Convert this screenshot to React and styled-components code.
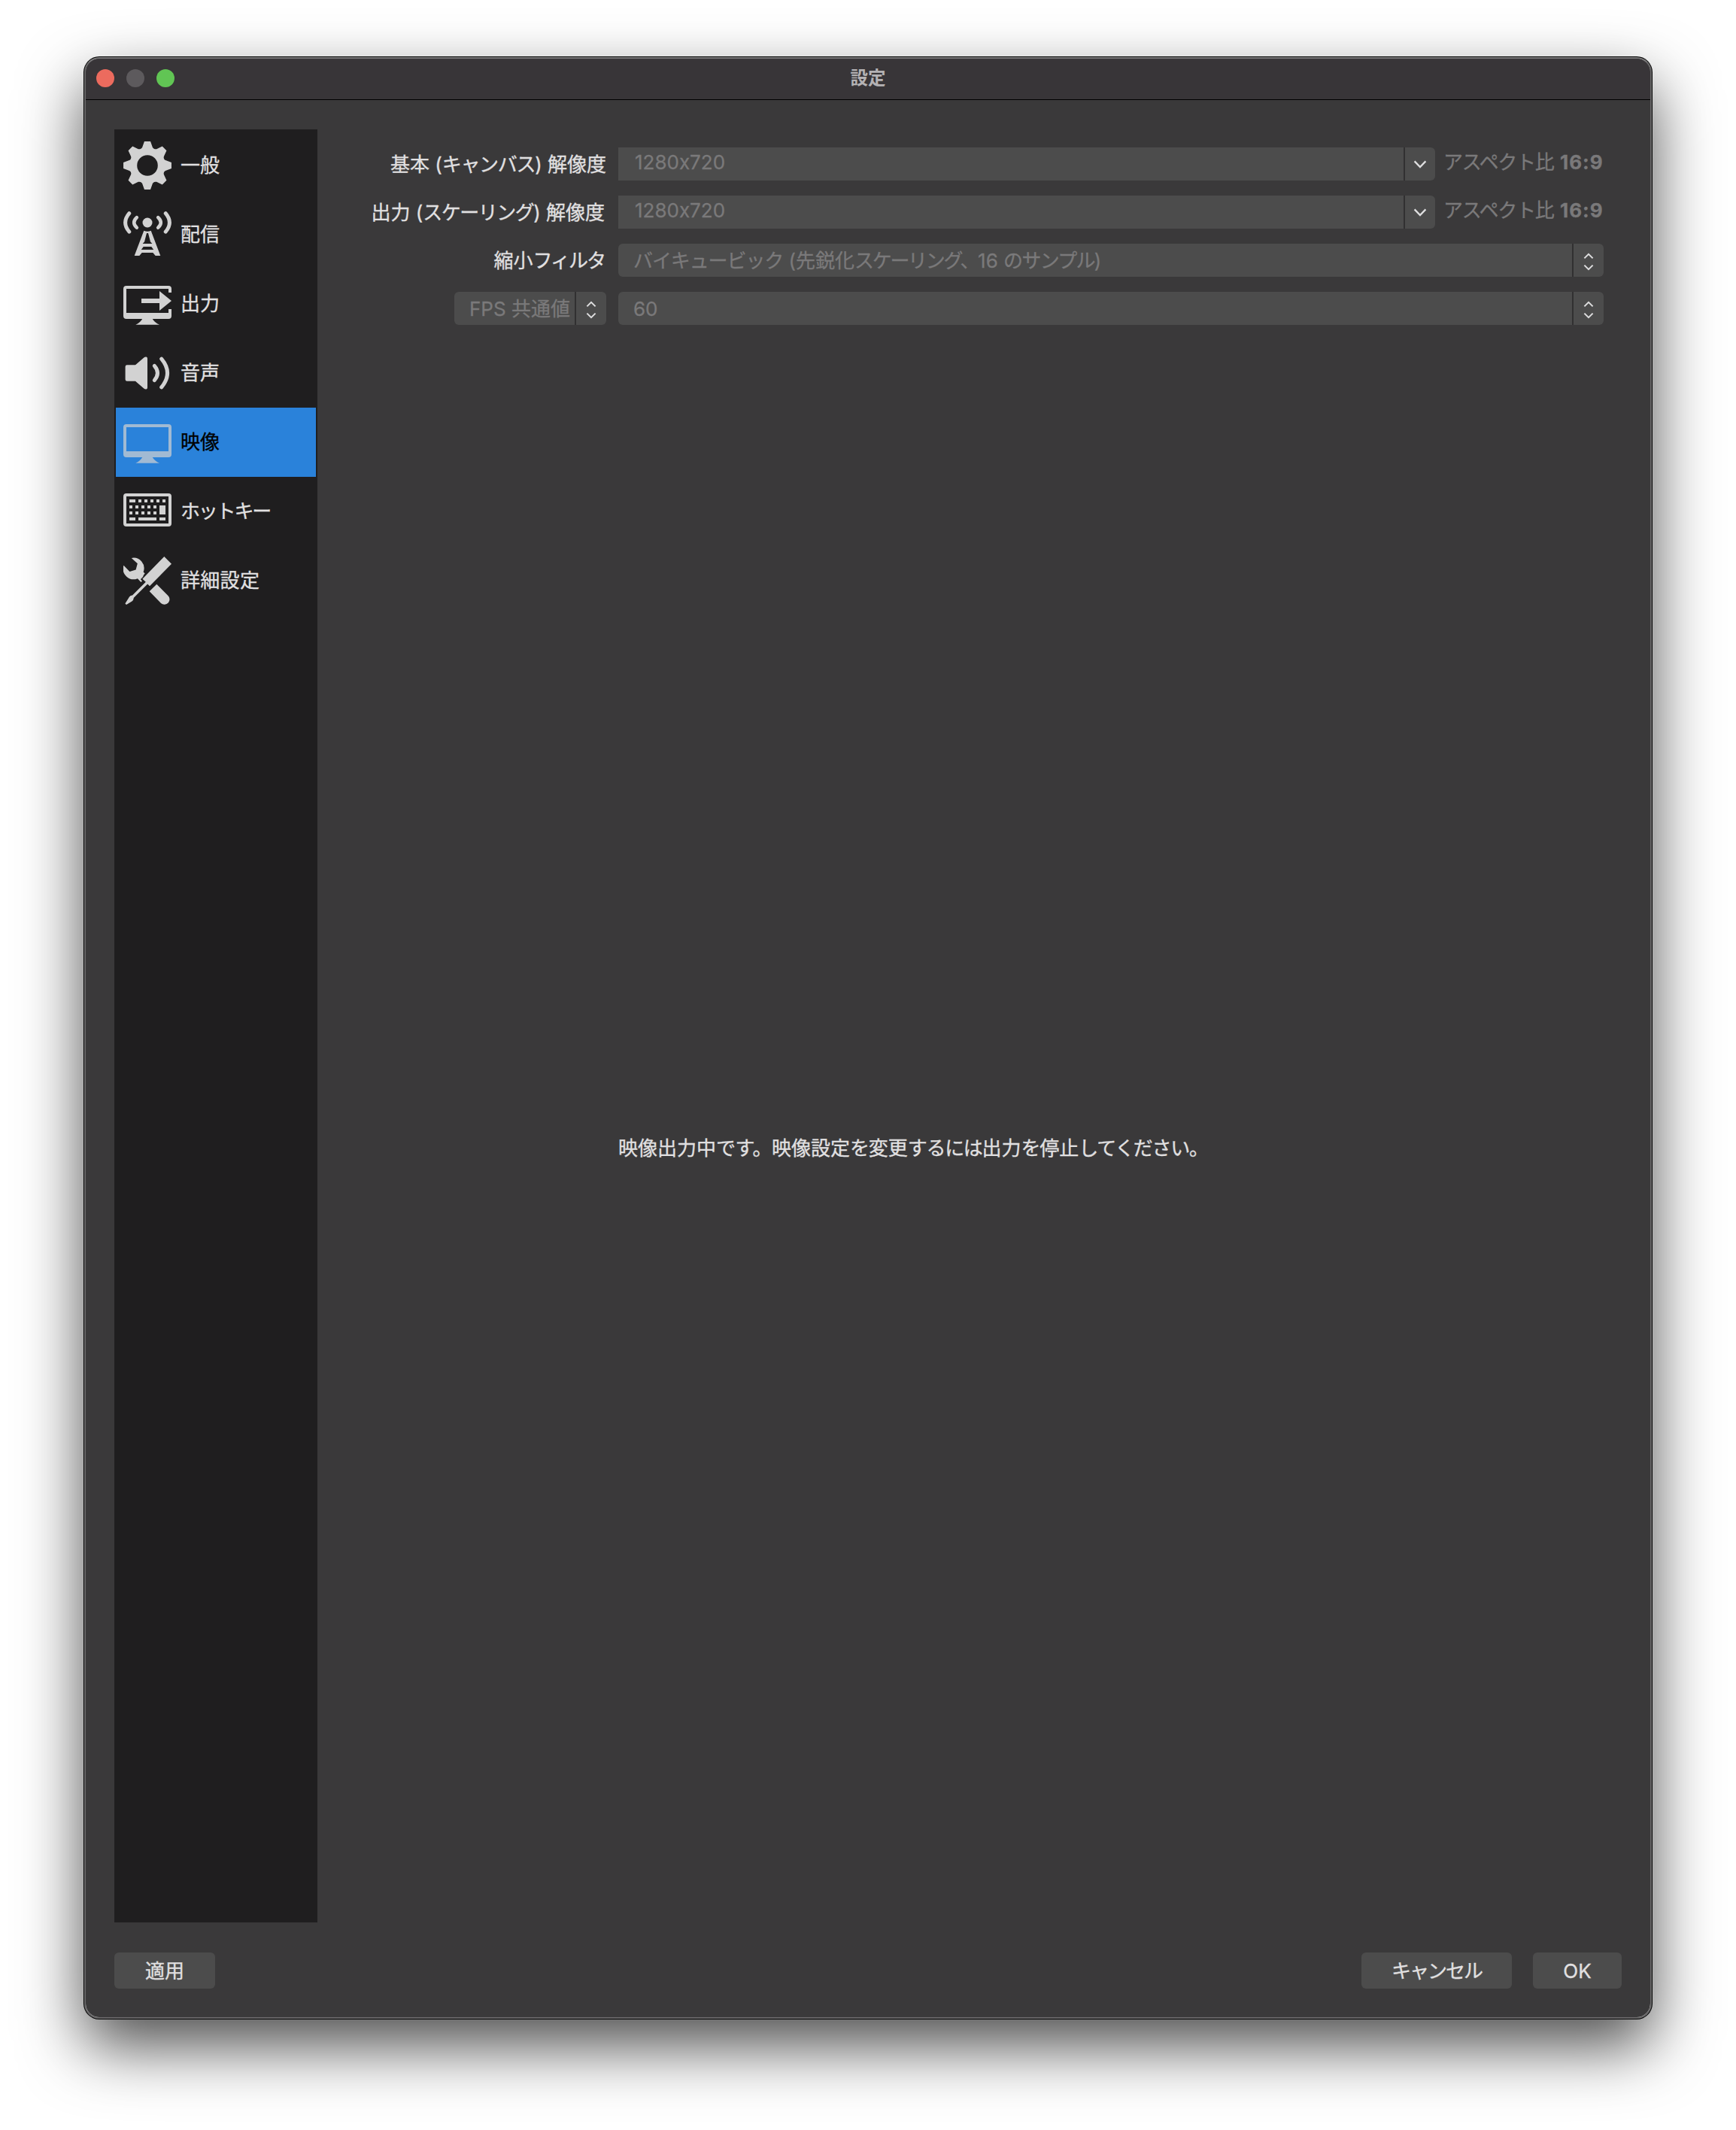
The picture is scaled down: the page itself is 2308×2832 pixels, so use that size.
import React from "react";
import styled, { createGlobalStyle, css } from "styled-components";

const GlobalStyle = createGlobalStyle`
  * { box-sizing: border-box; }
  html, body { margin: 0; padding: 0; background: #fff; }
  body {
    font-family: Inter, "Noto Sans CJK JP", sans-serif;
    font-size: 26px;
    font-weight: 400;
    font-feature-settings: "calt" 0;
    -webkit-text-stroke: 0.3px currentColor;
    line-height: 36px;
    color: #e1e0e1;
  }
`;

const Desktop = styled.div`
  width: 2308px;
  height: 2832px;
  padding: 76px 112px 148px;
  overflow: hidden;
  background: #fff;
`;

const Window = styled.main`
  display: flex;
  flex-direction: column;
  width: 2084px;
  height: 2608px;
  border: 2px solid #666566;
  border-top-color: #787778;
  border-radius: 20px;
  background: #3a393a;
  background-clip: padding-box;
  box-shadow: 0 0 0 1px #000, 0 36px 84px rgba(0, 0, 0, 0.7);
`;

const TitleBar = styled.header`
  display: grid;
  grid-template-columns: 1fr auto 1fr;
  align-items: center;
  height: 55px;
  padding: 0 14px 2px;
  border-bottom: 1px solid #000;
  border-radius: 18px 18px 0 0;
  background: #383538;
`;

const Lights = styled.div`
  display: flex;
  gap: 16px;
`;

const Light = styled.span`
  width: 24px;
  height: 24px;
  border-radius: 50%;
  background: ${(p) => p.$color};
`;

const Title = styled.h1`
  margin: 0;
  padding-bottom: 1px;
  font-size: 23.5px;
  font-weight: 700;
  -webkit-text-stroke: 0;
  line-height: 34px;
  color: #b4b2b4;
`;

const Content = styled.div`
  display: flex;
  flex: 1;
  padding: 39px 38px 0;
`;

const Sidebar = styled.nav`
  width: 270px;
  height: 2384px;
  padding: 2px;
  background: #1f1e1f;
`;

const NavItem = styled.div`
  display: flex;
  align-items: center;
  gap: 12px;
  height: 92px;
  padding-left: 10px;
  color: #e1e0e1;
  fill: #d2d2d2;
  stroke: #d2d2d2;
  ${(p) =>
    p.$active &&
    css`
      background: #2a82da;
      color: #000;
      fill: #a1bad3;
      stroke: #a1bad3;
    `}
`;

const IconSvg = styled.svg`
  width: 64px;
  height: 64px;
  flex: none;
`;

const Panel = styled.section`
  display: flex;
  flex-direction: column;
  width: 1710px;
  padding-top: 24px;
`;

const Row = styled.div`
  display: grid;
  grid-template-columns: 384px 1310px;
  column-gap: 16px;
  height: 44px;
  margin-bottom: 20px;
`;

const Label = styled.div`
  display: flex;
  justify-content: flex-end;
  align-items: center;
  white-space: pre;
  padding-top: 2px;
  padding-right: ${(p) => p.$inset || 0}px;
`;

const Control = styled.div`
  display: flex;
  justify-content: flex-end;
`;

const Field = styled.div`
  display: flex;
  gap: 11px;
`;

const Select = styled.div`
  display: flex;
  width: ${(p) => p.$width}px;
  height: 44px;
  border-radius: ${(p) => (p.$editable ? "0 6px 6px 0" : "6px")};
  overflow: hidden;
  background: #4c4c4c;
`;

const Value = styled.div`
  flex: 1;
  padding-left: ${(p) => (p.$editable ? 22 : 20)}px;
  line-height: ${(p) => (p.$editable ? 40 : 46)}px;
  white-space: pre;
  color: #7a797a;
`;

const Arrow = styled.div`
  display: flex;
  align-items: center;
  justify-content: center;
  width: 42px;
  padding-top: 1px;
  border-left: 2px solid #313031;
`;

const ArrowSvg = styled.svg`
  width: 20px;
  height: 28px;
  fill: none;
  stroke: #dededf;
  stroke-width: 2;
`;

const Aspect = styled.div`
  line-height: 40px;
  white-space: pre;
  color: #7a797a;
`;

const Ratio = styled.b`
  letter-spacing: 1px;
`;

const Track = styled.span`
  letter-spacing: ${(p) => p.$by}px;
`;

const Notice = styled.p`
  margin: 1057px 0 0 400px;
  white-space: nowrap;
`;

const Footer = styled.footer`
  display: flex;
  align-items: center;
  height: 126px;
  padding: 2px 38px 0;
`;

const Button = styled.div`
  width: ${(p) => p.$width}px;
  height: 48px;
  border-radius: 6px;
  background: #4c4c4c;
  line-height: 49px;
  text-align: center;
`;

const Spacer = styled.div`
  flex: ${(p) => (p.$width ? "none" : 1)};
  width: ${(p) => p.$width || 0}px;
`;

const polar = (r, deg) => {
  const a = (deg * Math.PI) / 180;
  return `${(32 + r * Math.sin(a)).toFixed(2)} ${(32 - r * Math.cos(a)).toFixed(2)}`;
};

const gearPath =
  [0, 45, 90, 135, 180, 225, 270, 315]
    .map(
      (a, i) =>
        `${i ? "L" : "M"}${polar(32.2, a - 7.2)}L${polar(32.2, a + 7.2)}L${polar(25, a + 16)}Q${polar(
          24,
          a + 18
        )} ${polar(23.8, a + 22.5)}Q${polar(24, a + 27)} ${polar(25, a + 29)}`
    )
    .join("") + "ZM32 18.2a13.8 13.8 0 1 0 0 27.6a13.8 13.8 0 1 0 0-27.6Z";

const GearIcon = () => (
  <IconSvg viewBox="0 0 64 64">
    <path d={gearPath} fillRule="evenodd" stroke="none" />
  </IconSvg>
);

const AntennaIcon = () => (
  <IconSvg viewBox="0 0 64 64">
    <g fill="none" strokeLinecap="round">
      <path d="M17.8 9.2Q10.6 16 17.8 22.6M46.2 9.2Q53.4 16 46.2 22.6" strokeWidth="4.6" />
      <path d="M7.8 3.7Q-2.6 16 7.8 28.1M56.2 3.7Q66.6 16 56.2 28.1" strokeWidth="4.9" />
    </g>
    <circle cx="32" cy="16" r="6.5" stroke="none" />
    <path
      stroke="none"
      fillRule="evenodd"
      d="M27.3 26.8Q32 28.6 36.7 26.8L49.3 60H42.7L39.3 56H24.7L21.3 60H14.7ZM31 30L28 41.5L25.6 44H38.4L36 41.5L33 30ZM26.7 48L23.8 52H40.2L37.3 48Z"
    />
  </IconSvg>
);

const Stand = () => <path d="M25.2 52H38.8Q41.5 57 48 59.8H16.3Q22.5 57 25.2 52Z" />;

const OutputIcon = () => (
  <IconSvg viewBox="0 0 64 64">
    <g stroke="none">
      <path d="M4 8H60Q64 8 64 12V17H60V12H4V44H60V39H64V48Q64 52 60 52H4Q0 52 0 48V12Q0 8 4 8Z" />
      <path d="M24 25H48V15L64 28L48 41V31H24Z" />
      <Stand />
    </g>
  </IconSvg>
);

const AudioIcon = () => (
  <IconSvg viewBox="0 0 64 64">
    <path
      stroke="none"
      d="M5 21.2H16L27.6 11.3Q29 10.2 30.6 10.6Q32 11 32 12.8V51.2Q32 53 30.6 53.4Q29 53.8 27.6 52.7L16 42.8H5Q2.6 42.8 2.6 40.4V23.6Q2.6 21.2 5 21.2Z"
    />
    <g fill="none" strokeLinecap="round" strokeWidth="5">
      <path d="M41.3 22.4Q49.6 32 41.3 41.6" />
      <path d="M50.7 13.2Q66.4 32 50.7 50.9" />
    </g>
  </IconSvg>
);

const VideoIcon = () => (
  <IconSvg viewBox="0 0 64 64">
    <g stroke="none">
      <path fillRule="evenodd" d="M4 8H60Q64 8 64 12V48Q64 52 60 52H4Q0 52 0 48V12Q0 8 4 8ZM4 12V44H60V12Z" />
      <Stand />
    </g>
  </IconSvg>
);

const keys = [
  [8, 16, 8, 4],
  ...[20, 28, 36, 44, 52].map((x) => [x, 16, 4, 4]),
  ...[8, 16, 24, 32, 40].flatMap((x) => [
    [x, 24, 4, 4],
    [x, 32, 4, 4],
  ]),
  [48, 24, 8, 12],
  [8, 40, 8, 4],
  [20, 40, 24, 4],
  [48, 40, 8, 4],
];

const KeyboardIcon = () => (
  <IconSvg viewBox="0 0 64 64">
    <rect x="2" y="10" width="60" height="40" rx="2" fill="none" strokeWidth="4" />
    {keys.map(([x, y, w, h]) => (
      <rect key={`${x}-${y}`} x={x} y={y} width={w} height={h} stroke="none" />
    ))}
  </IconSvg>
);

const ToolsIcon = () => (
  <IconSvg viewBox="0 0 64 64">
    <g stroke="none">
      <path d="M10.8 1.9A14 14 0 0 1 26.6 20.6L28.6 22.6L27 24.6L26 27L22.8 30.2L25 32.4L23.4 34L18.9 29.2A14 14 0 0 1 .4 11.8L8.4 19.9L16.6 17.5L18.8 9.3Z" />
      <path d="M54.3 0L64 9.7L35 39.3L32.2 36.4L13.9 54.8Q13.6 58 11.4 59.4L4 63.9L2.4 62.4L8 53.6Q9.4 51.6 12 51.6L29.8 33.8L25.4 29.7Z" />
      <path d="M44.3 36.8L59.2 51.8A6.6 6.6 0 0 1 50 62L34.7 46.2Z" />
    </g>
  </IconSvg>
);

const DropArrow = () => (
  <ArrowSvg viewBox="0 0 20 28">
    <path d="M2.6 9.4L10 17L17.4 9.4" strokeWidth="2.3" />
  </ArrowSvg>
);

const StepArrow = () => (
  <ArrowSvg viewBox="0 0 20 28">
    <path d="M4.4 10.4L10 4.8L15.6 10.4M4.4 19.6L10 25.2L15.6 19.6" />
  </ArrowSvg>
);

const items = [
  { icon: GearIcon, text: "一般" },
  { icon: AntennaIcon, text: "配信" },
  { icon: OutputIcon, text: "出力" },
  { icon: AudioIcon, text: "音声" },
  { icon: VideoIcon, text: "映像", active: true },
  { icon: KeyboardIcon, text: "ホットキー", track: -2.2 },
  { icon: ToolsIcon, text: "詳細設定", track: 0.3 },
];

const Resolution = () => (
  <Field>
    <Select $width={1086} $editable>
      <Value $editable>1280x720</Value>
      <Arrow>
        <DropArrow />
      </Arrow>
    </Select>
    <Aspect>
      <Track $by={-1.3}>アスペクト</Track>比 <Ratio>16:9</Ratio>
    </Aspect>
  </Field>
);

export default function App() {
  return (
    <Desktop>
      <GlobalStyle />
      <Window>
        <TitleBar>
          <Lights>
            <Light $color="#ec6b5e" />
            <Light $color="#5d5a5d" />
            <Light $color="#61c554" />
          </Lights>
          <Title>設定</Title>
        </TitleBar>
        <Content>
          <Sidebar>
            {items.map(({ icon: Icon, text, active, track = 0 }) => (
              <NavItem key={text} $active={active}>
                <Icon />
                <Track $by={track}>{text}</Track>
              </NavItem>
            ))}
          </Sidebar>
          <Panel>
            <Row>
              <Label>
                基本 (<Track $by={-1.3}>キャンバス</Track>) 解像度
              </Label>
              <Resolution />
            </Row>
            <Row>
              <Label $inset={2}>
                出力 (<Track $by={-1.5}>スケーリング</Track>) 解像度
              </Label>
              <Resolution />
            </Row>
            <Row>
              <Label $inset={2}>
                縮小<Track $by={-2}>フィルタ</Track>
              </Label>
              <Select $width={1310}>
                <Value>
                  <Track $by={-1.1}>バイキュービック</Track> (先鋭化<Track $by={-2.3}>スケーリング、</Track>16{" "}
                  <Track $by={-1.7}>のサンプル</Track>)
                </Value>
                <Arrow>
                  <StepArrow />
                </Arrow>
              </Select>
            </Row>
            <Row>
              <Control>
                <Select $width={202}>
                  <Value>FPS 共通値</Value>
                  <Arrow>
                    <StepArrow />
                  </Arrow>
                </Select>
              </Control>
              <Select $width={1310}>
                <Value>60</Value>
                <Arrow>
                  <StepArrow />
                </Arrow>
              </Select>
            </Row>
            <Notice>
              映像出力中<Track $by={-0.5}>です。</Track>映像設定<Track $by={-1.2}>を</Track>変更
              <Track $by={-1.3}>するには</Track>出力<Track $by={-1.3}>を</Track>停止
              <Track $by={-1.3}>してください。</Track>
            </Notice>
          </Panel>
        </Content>
        <Footer>
          <Button $width={134}>適用</Button>
          <Spacer />
          <Button $width={200}>
            <Track $by={-2}>キャンセル</Track>
          </Button>
          <Spacer $width={28} />
          <Button $width={118}>OK</Button>
        </Footer>
      </Window>
    </Desktop>
  );
}
